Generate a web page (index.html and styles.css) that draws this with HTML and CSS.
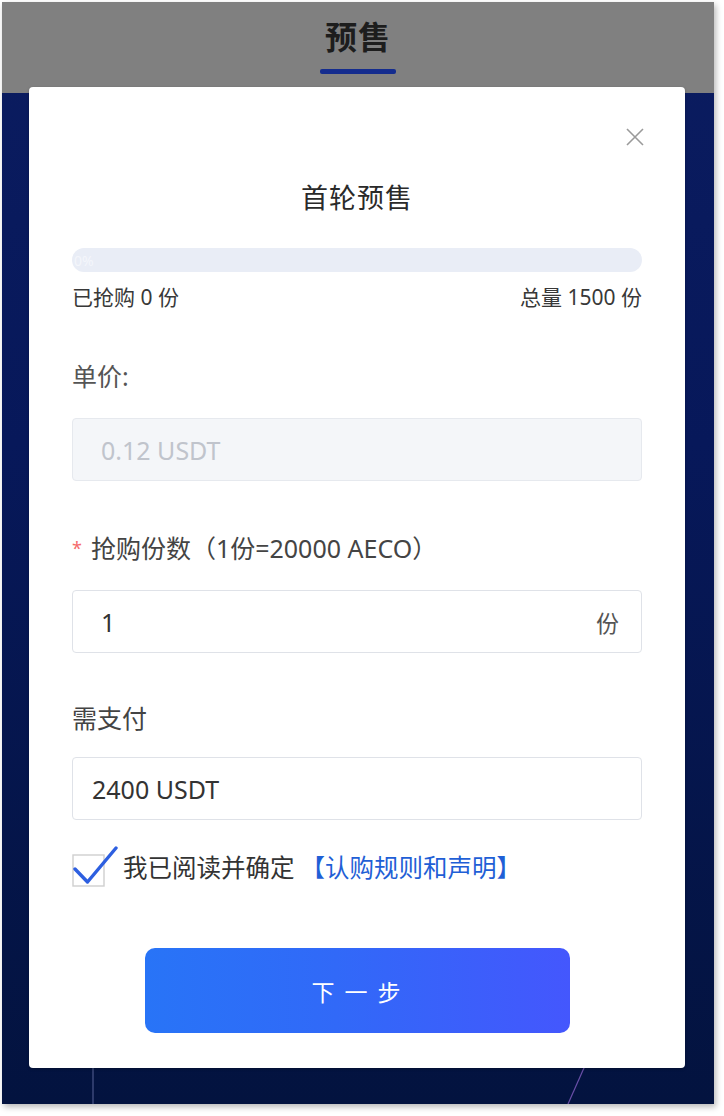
FILE: index.html
```html
<!DOCTYPE html>
<html lang="zh-CN">
<head>
<meta charset="utf-8">
<title>预售</title>
<link rel="stylesheet" href="styles.css">
</head>
<body>
<div class="frame">
  <div class="header">
    <div class="header-title">预售</div>
    <div class="header-bar"></div>
  </div>
  <svg class="bg-lines" width="712" height="1017" viewBox="0 0 712 1017">
    <line x1="91" y1="0" x2="91" y2="1017" stroke="#4a5688" stroke-width="1.2"/>
    <line x1="640" y1="850" x2="566" y2="1017" stroke="#6a4fa8" stroke-width="1.2"/>
  </svg>
  <div class="modal">
    <div class="close-row">
      <svg class="close" width="20" height="20" viewBox="0 0 20 20">
        <path d="M2 2 L18 18 M18 2 L2 18" stroke="#9a9a9a" stroke-width="1.6" fill="none"/>
      </svg>
    </div>
    <div class="modal-title">首轮预售</div>
    <div class="progress"><span class="progress-text">0%</span></div>
    <div class="stats">
      <span>已抢购 0 份</span>
      <span>总量 1500 份</span>
    </div>
    <div class="label label-first">单价:</div>
    <div class="field field-disabled">0.12 USDT</div>
    <div class="label"><span class="req">*</span>抢购份数（1份=20000 AECO）</div>
    <div class="field field-unit"><span>1</span><span class="unit">份</span></div>
    <div class="label label-pay">需支付</div>
    <div class="field field-pay">2400 USDT</div>
    <div class="agree">
      <svg class="check" width="46" height="42" viewBox="0 0 46 42">
        <rect x="1" y="10" width="31" height="31" fill="#fff" stroke="#cfcfcf" stroke-width="1.4"/>
        <path d="M3 24 L15.5 37 L44 3" stroke="#2d5fe0" stroke-width="3.4" fill="none" stroke-linecap="round" stroke-linejoin="round"/>
      </svg>
      <span class="agree-text">我已阅读并确定</span>
      <span class="agree-link">【认购规则和声明】</span>
    </div>
    <div class="btn-row">
      <div class="btn">下 一 步</div>
    </div>
  </div>
</div>
</body>
</html>
```

FILE: styles.css
```css
html, body {
  margin: 0;
  padding: 0;
  background: #ffffff;
}

body {
  font-family: "Noto Sans", "Noto Sans CJK SC", sans-serif;
  width: 724px;
  height: 1116px;
  overflow: hidden;
}

.frame {
  margin: 2px 0 0 2px;
  width: 712px;
  height: 1102px;
  position: relative;
  overflow: hidden;
  background: linear-gradient(180deg, #0b1c60 0%, #07185a 40%, #03133f 100%);
  box-shadow: 2px 3px 6px rgba(0, 0, 0, 0.28);
}

.header {
  height: 91px;
  background: #808080;
  display: flex;
  flex-direction: column;
  align-items: center;
}

.header-title {
  margin-top: 13px;
  font-size: 32px;
  line-height: 44px;
  font-weight: 700;
  color: #1d1d1d;
  letter-spacing: 1px;
}

.header-bar {
  margin-top: 10px;
  width: 76px;
  height: 5px;
  border-radius: 2px;
  background: #142c8e;
}

.bg-lines {
  position: absolute;
  left: 0;
  top: 85px;
}

.modal {
  position: absolute;
  left: 27px;
  top: 85px;
  width: 656px;
  height: 981px;
  box-sizing: border-box;
  padding: 0 43px;
  background: #ffffff;
  border-radius: 4px;
  display: flex;
  flex-direction: column;
  box-shadow: 0 1px 3px rgba(0, 0, 0, 0.25);
}

.close-row {
  display: flex;
  justify-content: flex-end;
  padding-top: 40px;
  margin-right: -3px;
  height: 20px;
}

.modal-title {
  margin-top: 34px;
  text-align: center;
  font-size: 27px;
  line-height: 34px;
  color: #2a2a2a;
  letter-spacing: 1px;
}

.progress {
  margin-top: 33px;
  height: 24px;
  border-radius: 12px;
  background: #e9edf6;
  display: flex;
  align-items: center;
}

.progress-text {
  margin-left: 2px;
  font-size: 14px;
  color: #f4f6fb;
}

.stats {
  margin-top: 13px;
  display: flex;
  justify-content: space-between;
  font-size: 21px;
  line-height: 24px;
  color: #383838;
}

.label {
  margin-top: 53px;
  font-size: 25px;
  line-height: 28px;
  color: #444444;
  display: flex;
  align-items: center;
}

.label-first {
  color: #555555;
}

.label-pay {
  margin-top: 51px;
}

.req {
  color: #f56c6c;
  font-size: 18px;
  margin-right: 9px;
}

.field {
  margin-top: 28px;
  height: 63px;
  box-sizing: border-box;
  border: 1px solid #dfe2e8;
  border-radius: 4px;
  background: #ffffff;
  display: flex;
  align-items: center;
  padding: 0 28px;
  font-size: 25px;
  color: #333333;
}

.field-disabled {
  background: #f4f6f9;
  border-color: #e6e9ee;
  color: #c0c4cc;
}

.field-unit {
  justify-content: space-between;
  padding-right: 22px;
}

.unit {
  color: #555555;
  font-size: 23px;
}

.field-pay {
  margin-top: 25px;
  padding-left: 19px;
}

.agree {
  margin-top: 25px;
  height: 42px;
  display: flex;
  align-items: center;
}

.check {
  flex: none;
  margin-right: 5px;
}

.agree-text {
  font-size: 24.5px;
  color: #333333;
  margin-top: 1px;
}

.agree-link {
  font-size: 24.5px;
  color: #1f5fd6;
  margin-top: 1px;
  margin-left: 6px;
}

.btn-row {
  margin-top: 61px;
  display: flex;
  justify-content: center;
}

.btn {
  width: 425px;
  height: 85px;
  border-radius: 10px;
  background: linear-gradient(90deg, #2874f7 0%, #3169f8 45%, #4457fd 100%);
  color: #ffffff;
  font-size: 23px;
  display: flex;
  align-items: center;
  justify-content: center;
  letter-spacing: 2px;
}
```
